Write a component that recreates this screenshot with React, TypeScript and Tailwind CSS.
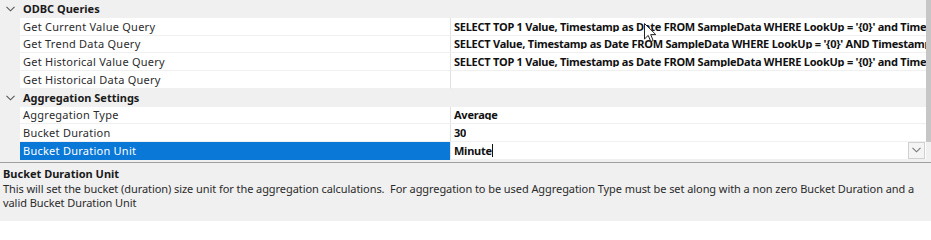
import React from 'react';

type Row =
  | { kind: 'category'; label: string }
  | { kind: 'prop'; label: string; value: string; selected?: boolean };

const rows: Row[] = [
  { kind: 'category', label: 'ODBC Queries' },
  { kind: 'prop', label: 'Get Current Value Query', value: "SELECT TOP 1 Value, Timestamp as Date FROM SampleData WHERE LookUp = '{0}' and Timestamp <= '{1}' ORDER BY Timestamp DESC" },
  { kind: 'prop', label: 'Get Trend Data Query', value: "SELECT Value, Timestamp as Date FROM SampleData WHERE LookUp = '{0}' AND Timestamp >= '{1}' AND Timestamp <= '{2}'" },
  { kind: 'prop', label: 'Get Historical Value Query', value: "SELECT TOP 1 Value, Timestamp as Date FROM SampleData WHERE LookUp = '{0}' and Timestamp <= '{1}' ORDER BY Timestamp DESC" },
  { kind: 'prop', label: 'Get Historical Data Query', value: '' },
  { kind: 'category', label: 'Aggregation Settings' },
  { kind: 'prop', label: 'Aggregation Type', value: 'Average' },
  { kind: 'prop', label: 'Bucket Duration', value: '30' },
  { kind: 'prop', label: 'Bucket Duration Unit', value: 'Minute', selected: true },
];

function Chevron({ className = '' }: { className?: string }) {
  return (
    <svg width="9" height="6" viewBox="0 0 9 6" className={className}>
      <path d="M0.5 0.8 L4.5 4.8 L8.5 0.8" fill="none" stroke="currentColor" strokeWidth="1.1" />
    </svg>
  );
}

function MouseCursor() {
  return (
    <svg width="13" height="20" viewBox="0 0 13 20" className="absolute left-[644px] top-[23px] pointer-events-none">
      <path d="M0.5 0.5 L0.5 16 L4.2 12.4 L6.8 18.6 L9.2 17.6 L6.7 11.6 L11.8 11.6 Z" fill="white" stroke="#222" strokeWidth="1" strokeLinejoin="round" />
    </svg>
  );
}

export default function App() {
  return (
    <div className="relative w-[931px] h-[221px] overflow-hidden bg-[#f0f0f0] flex flex-col text-[11px] font-['Noto_Sans',sans-serif]">
      {/* Property grid */}
      <div className="h-[162px] flex">
        <div className="flex-1 min-w-0 flex flex-col">
          {rows.map((row) =>
            row.kind === 'category' ? (
              <div key={row.label} className="h-[17.75px] flex items-center bg-[#f0f0f0]">
                <div className="w-5 flex justify-center text-[#555]">
                  <Chevron />
                </div>
                <span className="pl-[3px] font-bold text-[#1a1a1a] leading-none">{row.label}</span>
              </div>
            ) : (
              <div key={row.label} className="h-[17.75px] flex">
                <div className="w-5 shrink-0 bg-[#f0f0f0]" />
                <div
                  className={`w-[431px] shrink-0 flex items-center pl-[3px] border-r border-[#e2e2e2] ${
                    row.selected ? 'bg-[#0a78d7] text-white' : 'bg-white text-[#2b2b2b] border-b border-b-[#f0f0f0]'
                  }`}
                >
                  <span className="leading-none whitespace-nowrap tracking-[0.25px]">{row.label}</span>
                </div>
                <div className="flex-1 min-w-0 flex items-center bg-white border-b border-[#f0f0f0] pl-[3px]">
                  <span className="leading-none whitespace-nowrap overflow-hidden font-bold text-[#111] tracking-[-0.25px]">{row.value}</span>
                  {row.selected && (
                    <>
                      <span className="w-px h-[13px] bg-[#111]" />
                      <span className="flex-1" />
                      <span className="w-[17px] h-[17px] border border-[#d0d0d0] bg-[#f4f4f4] flex items-center justify-center text-[#777] mr-[1px]">
                        <Chevron />
                      </span>
                    </>
                  )}
                </div>
              </div>
            )
          )}
        </div>
        <div className="w-[5px] shrink-0 flex flex-col">
          <div className="h-[142px] bg-[#c6c6c6]" />
          <div className="flex-1 bg-[#f0f0f0]" />
        </div>
      </div>

      {/* Description panel */}
      <div className="flex-1 border-t border-[#a0a0a0] px-[3px] pt-[2px] text-[#1a1a1a]">
        <div className="font-bold leading-[17px]">Bucket Duration Unit</div>
        <div className="leading-[14px] whitespace-pre text-[#2b2b2b] tracking-[-0.07px]">
          {'This will set the bucket (duration) size unit for the aggregation calculations.  For aggregation to be used Aggregation Type must be set along with a non zero Bucket Duration and a\nvalid Bucket Duration Unit'}
        </div>
      </div>

      <MouseCursor />
    </div>
  );
}
